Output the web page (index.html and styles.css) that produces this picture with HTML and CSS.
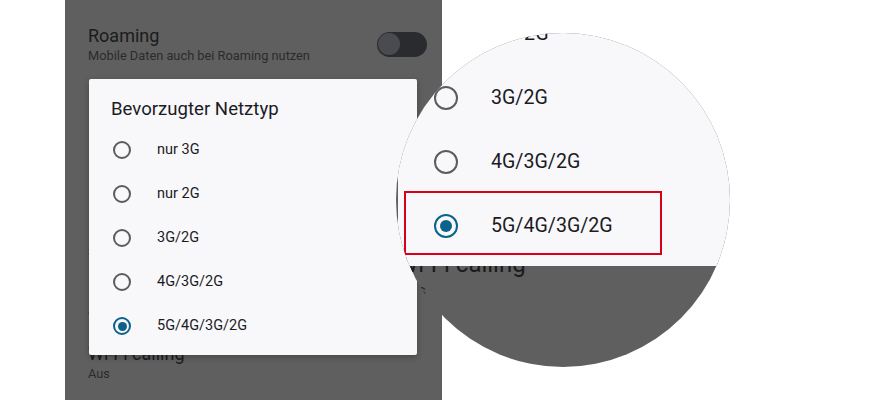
FILE: index.html
```
<!DOCTYPE html>
<html lang="de">
<head>
<meta charset="utf-8">
<title>Bevorzugter Netztyp</title>
<link rel="stylesheet" href="styles.css">
</head>
<body>
<div class="stage">
  <div class="phone">
    <div class="settings">
      <div class="item item-roaming">
        <div class="texts">
          <div class="title">Roaming</div>
          <div class="sub">Mobile Daten auch bei Roaming nutzen</div>
        </div>
        <div class="switch"><span class="thumb"></span></div>
      </div>
      <div class="item gap-a">
        <div class="title">Bevorzugter Netztyp</div>
        <div class="sub">5G/4G/3G/2G</div>
      </div>
      <div class="item gap-b">
        <div class="title">Erweiterte Anrufe</div>
      </div>
      <div class="item gap-c">
        <div class="title">Netzbetreiber</div>
        <div class="sub">Sim-Karte</div>
      </div>
      <div class="item gap-d">
        <div class="title">Erweitert</div>
        <div class="sub">Automatisch Netz auswählen</div>
      </div>
      <div class="item gap-e">
        <div class="title">Wi-Fi calling</div>
        <div class="sub">Aus</div>
      </div>
    </div>

    <div class="dialog">
      <div class="dialog-title">Bevorzugter Netztyp</div>
      <div class="options">
        <div class="option"><span class="radio"></span><span class="label">nur 3G</span></div>
        <div class="option"><span class="radio"></span><span class="label">nur 2G</span></div>
        <div class="option"><span class="radio"></span><span class="label">3G/2G</span></div>
        <div class="option"><span class="radio"></span><span class="label">4G/3G/2G</span></div>
        <div class="option"><span class="radio checked"></span><span class="label">5G/4G/3G/2G</span></div>
      </div>
    </div>
  </div>

  <div class="magnifier">
    <div class="mag-dialog">
      <div class="mag-options">
        <div class="mag-option"><span class="mag-radio"></span><span class="mag-label">nur 2G</span></div>
        <div class="mag-option"><span class="mag-radio"></span><span class="mag-label">3G/2G</span></div>
        <div class="mag-option"><span class="mag-radio"></span><span class="mag-label">4G/3G/2G</span></div>
        <div class="mag-option"><span class="mag-radio checked"></span><span class="mag-label">5G/4G/3G/2G</span></div>
      </div>
    </div>
    <div class="mag-below">
      <div class="mag-title">Wi-Fi calling</div>
      <div class="mag-sub">Aus</div>
    </div>
    <div class="highlight"></div>
  </div>
</div>
</body>
</html>
```
FILE: styles.css
```
* { box-sizing: border-box; }

html, body {
  margin: 0;
  padding: 0;
  background: #ffffff;
}

body {
  font-family: Roboto, "Noto Sans", "Liberation Sans", sans-serif;
  color: #1c1b1f;
}

.stage {
  position: relative;
  width: 879px;
  height: 400px;
  overflow: hidden;
  background: #ffffff;
}

/* ---------- left phone screen (dimmed) ---------- */
.phone {
  position: relative;
  margin-left: 65px;
  width: 377px;
  height: 400px;
  background: #5f5f5f;
}

.settings {
  padding: 25px 15px 0 23px;
}

.item {
  display: flex;
  flex-direction: column;
}

.item-roaming {
  flex-direction: row;
  align-items: center;
  justify-content: space-between;
}

.texts {
  display: flex;
  flex-direction: column;
}

.title {
  font-size: 18px;
  line-height: 22px;
  color: #1b1b1c;
}

.sub {
  font-size: 12.8px;
  line-height: 18px;
  color: #2b2b2d;
}

.gap-a { padding-top: 30px; }
.gap-b { padding-top: 33px; }
.gap-c { padding-top: 31px; }
.gap-d { padding-top: 18px; }
.gap-e { padding-top: 24px; }

.switch {
  display: flex;
  align-items: center;
  width: 50px;
  height: 25px;
  border-radius: 13px;
  background: #2a2b2f;
  padding-left: 1px;
  margin-top: -2px;
}

.thumb {
  width: 22px;
  height: 22px;
  border-radius: 50%;
  background: #4a4b50;
}

/* ---------- dialog ---------- */
.dialog {
  position: absolute;
  left: 24px;
  top: 79px;
  width: 328px;
  height: 276px;
  background: #f8f8fb;
  border-radius: 2px;
  box-shadow: 0 2px 6px rgba(0, 0, 0, 0.25);
  padding: 18px 0 7px 0;
}

.dialog-title {
  font-size: 18.6px;
  line-height: 24px;
  padding-left: 22px;
  color: #1c1b1f;
}

.options {
  margin-top: 7px;
  display: flex;
  flex-direction: column;
}

.option {
  display: flex;
  align-items: center;
  height: 44px;
  padding-left: 24px;
  gap: 26px;
}

.radio {
  width: 18px;
  height: 18px;
  border-radius: 50%;
  border: 2px solid #5c5c60;
  display: flex;
  align-items: center;
  justify-content: center;
  flex: none;
}

.radio.checked {
  border-color: #0b628a;
}

.radio.checked::after {
  content: "";
  width: 9px;
  height: 9px;
  border-radius: 50%;
  background: #0b628a;
}

.label {
  font-size: 14.5px;
  line-height: 18px;
  color: #1c1b1f;
}

/* ---------- magnifier ---------- */
.magnifier {
  position: absolute;
  left: 396px;
  top: 33px;
  width: 334px;
  height: 334px;
  border-radius: 50%;
  overflow: hidden;
  background: #5f5f5f;
}

.mag-dialog {
  position: relative;
  z-index: 1;
  margin-left: 2px;
  height: 233px;
  background: #f8f8fb;
  overflow: hidden;
}

.mag-options {
  margin-top: -31px;
  display: flex;
  flex-direction: column;
}

.mag-option {
  display: flex;
  align-items: center;
  height: 64px;
  padding-left: 36px;
  gap: 33px;
}

.mag-radio {
  width: 24px;
  height: 24px;
  border-radius: 50%;
  border: 2.5px solid #5c5c60;
  display: flex;
  align-items: center;
  justify-content: center;
  flex: none;
}

.mag-radio.checked {
  border-color: #0b628a;
}

.mag-radio.checked::after {
  content: "";
  width: 12px;
  height: 12px;
  border-radius: 50%;
  background: #0b628a;
}

.mag-label {
  font-size: 19.6px;
  line-height: 24px;
  color: #1c1b1f;
}

.mag-below {
  margin-top: -16px;
  padding-left: 1px;
  display: flex;
  flex-direction: column;
}

.mag-title {
  font-size: 24px;
  line-height: 28px;
  color: #1b1b1c;
}

.mag-sub {
  font-size: 17px;
  line-height: 24px;
  color: #2b2b2d;
}

.highlight {
  position: absolute;
  left: 8px;
  top: 158px;
  width: 258px;
  height: 64px;
  border: 2px solid #d6001c;
  z-index: 2;
}
```
